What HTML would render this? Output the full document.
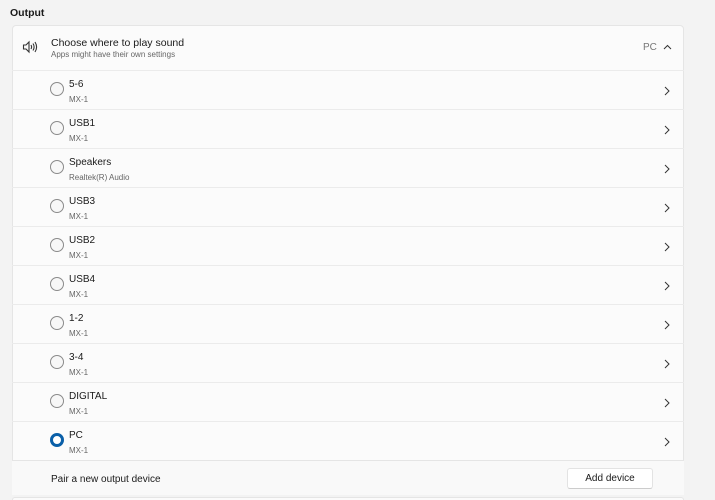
<!DOCTYPE html>
<html style="height:500px;overflow:hidden"><head><style>
*{margin:0;padding:0;box-sizing:border-box}
body{width:715px;height:500px;background:#f3f3f3;font-family:"Liberation Sans",sans-serif;color:#1a1a1a;position:relative;overflow:hidden}
.t{position:absolute;white-space:nowrap}
.card{position:absolute;left:12px;width:672px;background:#fbfbfb;border:1px solid #e5e5e5;border-radius:4px}
.row{position:absolute;left:12px;width:672px;height:39px;border-top:1px solid #ebebeb}
.radio{position:absolute;left:38px;top:11px;width:14px;height:14px;border:1px solid #8a8a8a;border-radius:50%;background:#f7f7f7}
.sel{border:3.5px solid #0a5fa8;background:#fff}
.nm{position:absolute;left:57px;top:8px;font-size:10px}
.sb{position:absolute;left:57px;top:24px;font-size:8px;color:#666}
.chev{position:absolute;left:652px;top:15px}
</style></head><body>
<div class="t" style="left:10px;top:7px;font-size:10.5px;font-weight:bold">Output</div>
<div class="card" style="top:25px;height:470px"></div>
<svg class="t" style="left:22px;top:40px" width="16" height="14" viewBox="0 0 16 14" fill="none" stroke="#333" stroke-width="1.1"><path d="M1.5 5h2.5l3-3v10l-3-3H1.5z"/><path d="M9 5q1.2 2 0 4M11 3.5q2.2 3.5 0 7M13 2q3.2 5 0 10"/></svg>
<div class="t" style="left:51px;top:37px;font-size:10.5px">Choose where to play sound</div>
<div class="t" style="left:51px;top:50px;font-size:8px;color:#666">Apps might have their own settings</div>
<div class="t" style="left:643px;top:42px;font-size:10px;color:#777">PC</div>
<svg class="t" style="left:663px;top:44px" width="9" height="6" viewBox="0 0 9 6" fill="none" stroke="#333" stroke-width="1"><path d="M1 5l3.5-3.5L8 5"/></svg>

<div class="row" style="top:70px"><div class="radio"></div><div class="nm">5-6</div><div class="sb">MX-1</div><svg class="chev" width="6" height="10"><path d="M1 1l4 4-4 4" fill="none" stroke="#333"/></svg></div>
<div class="row" style="top:109px"><div class="radio"></div><div class="nm">USB1</div><div class="sb">MX-1</div><svg class="chev" width="6" height="10"><path d="M1 1l4 4-4 4" fill="none" stroke="#333"/></svg></div>
<div class="row" style="top:148px"><div class="radio"></div><div class="nm">Speakers</div><div class="sb">Realtek(R) Audio</div><svg class="chev" width="6" height="10"><path d="M1 1l4 4-4 4" fill="none" stroke="#333"/></svg></div>
<div class="row" style="top:187px"><div class="radio"></div><div class="nm">USB3</div><div class="sb">MX-1</div><svg class="chev" width="6" height="10"><path d="M1 1l4 4-4 4" fill="none" stroke="#333"/></svg></div>
<div class="row" style="top:226px"><div class="radio"></div><div class="nm">USB2</div><div class="sb">MX-1</div><svg class="chev" width="6" height="10"><path d="M1 1l4 4-4 4" fill="none" stroke="#333"/></svg></div>
<div class="row" style="top:265px"><div class="radio"></div><div class="nm">USB4</div><div class="sb">MX-1</div><svg class="chev" width="6" height="10"><path d="M1 1l4 4-4 4" fill="none" stroke="#333"/></svg></div>
<div class="row" style="top:304px"><div class="radio"></div><div class="nm">1-2</div><div class="sb">MX-1</div><svg class="chev" width="6" height="10"><path d="M1 1l4 4-4 4" fill="none" stroke="#333"/></svg></div>
<div class="row" style="top:343px"><div class="radio"></div><div class="nm">3-4</div><div class="sb">MX-1</div><svg class="chev" width="6" height="10"><path d="M1 1l4 4-4 4" fill="none" stroke="#333"/></svg></div>
<div class="row" style="top:382px"><div class="radio"></div><div class="nm">DIGITAL</div><div class="sb">MX-1</div><svg class="chev" width="6" height="10"><path d="M1 1l4 4-4 4" fill="none" stroke="#333"/></svg></div>
<div class="row" style="top:421px"><div class="radio sel"></div><div class="nm">PC</div><div class="sb">MX-1</div><svg class="chev" width="6" height="10"><path d="M1 1l4 4-4 4" fill="none" stroke="#333"/></svg></div>
<div class="row" style="top:460px;height:35px;background:#f9f9f9;border-color:#e5e5e5"></div>
<div class="t" style="left:51px;top:474px;font-size:10px">Pair a new output device</div>
<div class="t" style="left:567px;top:468px;width:86px;height:21px;background:#fff;border:1px solid #e3e3e3;border-bottom-color:#ccc;border-radius:3px;font-size:10px;text-align:center;line-height:19px">Add device</div>
<div class="card" style="top:497px;height:3px;border-bottom:none;border-radius:4px 4px 0 0"></div>
</body></html>
